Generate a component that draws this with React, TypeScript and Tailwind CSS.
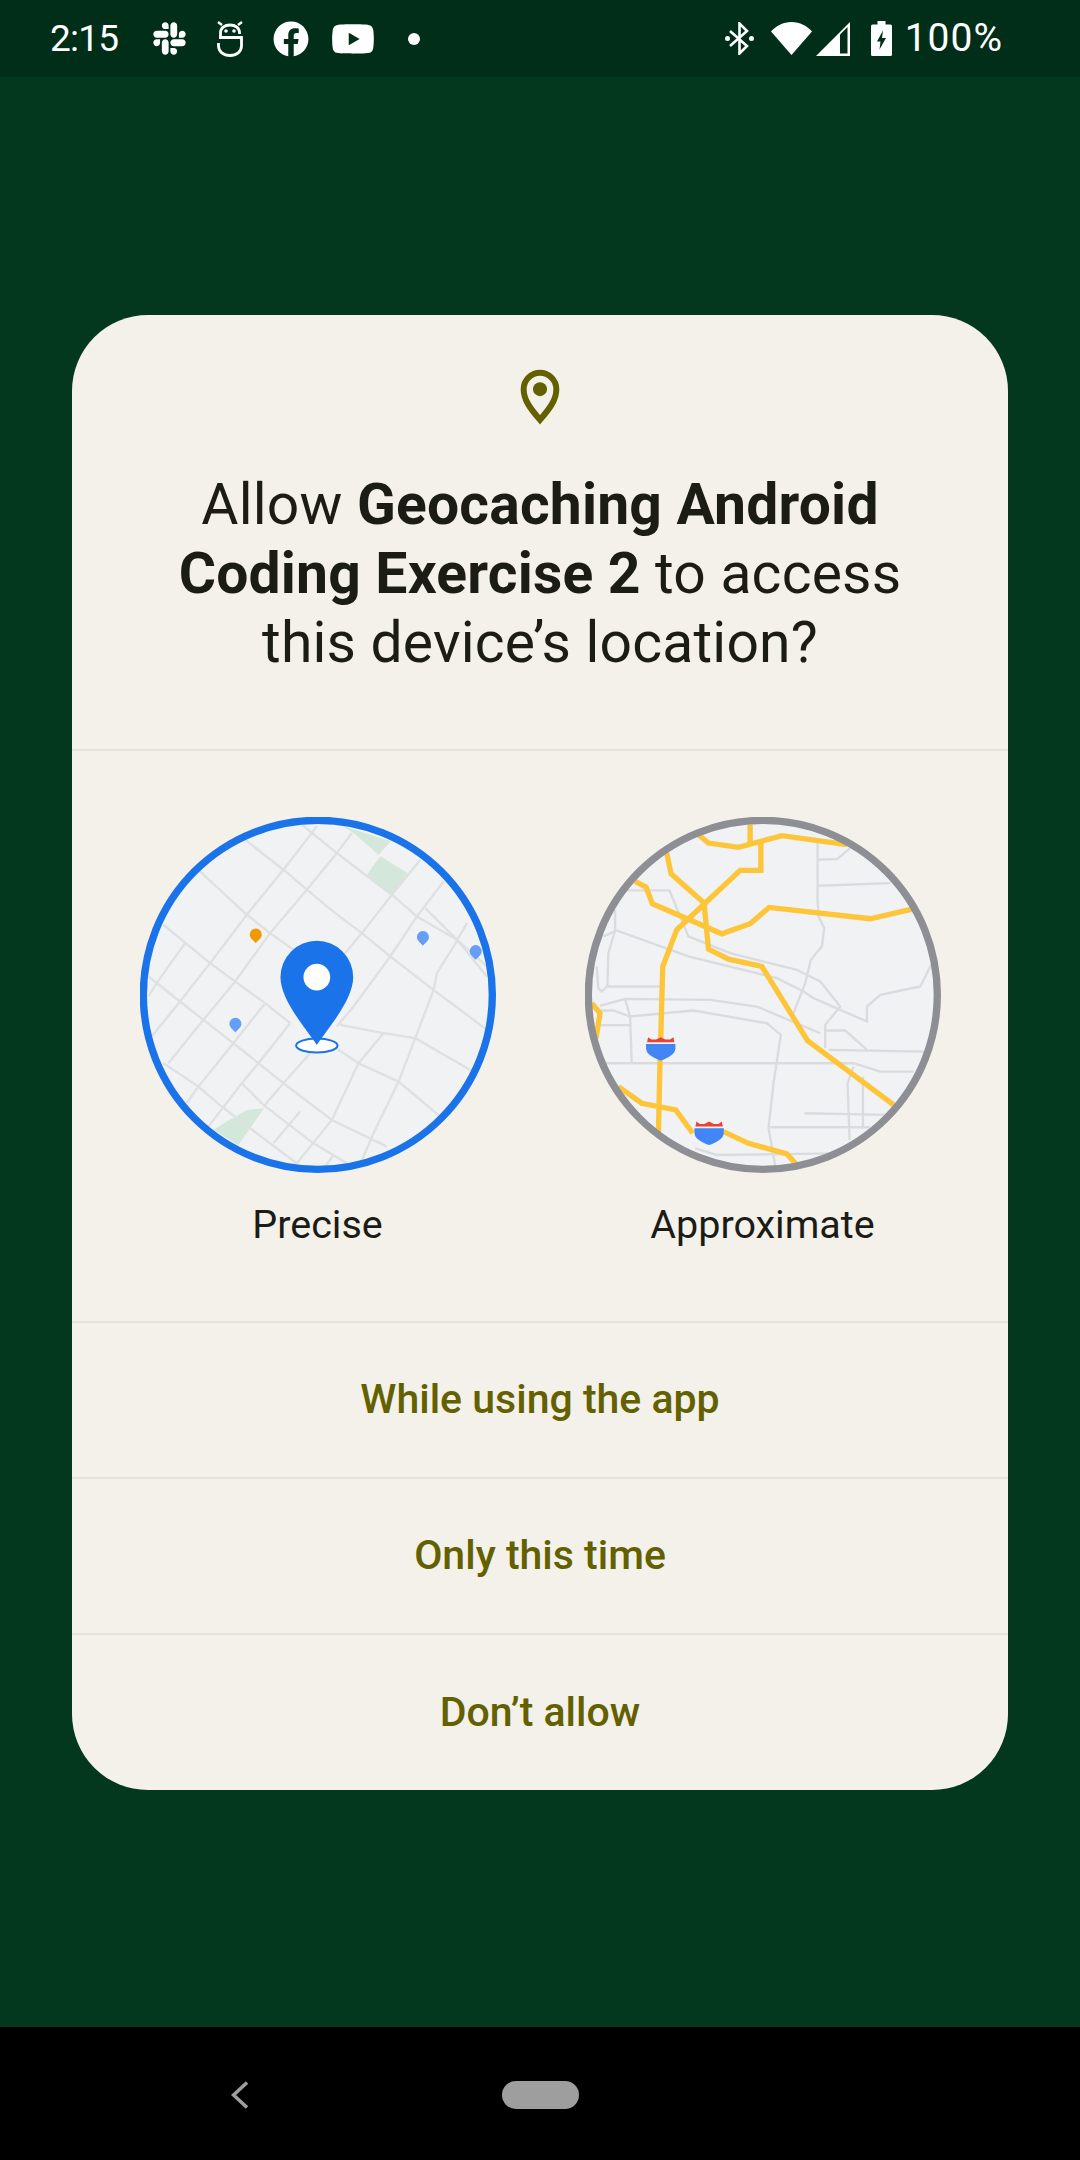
import { FaFacebook, FaSlack, FaYoutube } from "react-icons/fa";

const FONT = "font-['Roboto','Liberation_Sans',sans-serif]";

// map coordinates below are traced from a 1200 unit crop of each circle
const preciseRoads = [
  "M375 120L490 210L560 270L645 340L725 400L810 470L940 570L1100 690",
  "M545 75L650 160L735 225L815 285L890 350L1010 420L1100 530",
  "M240 215L380 345L450 400L590 500",
  "M130 375L270 490L345 545L435 610L510 670",
  "M85 530L180 605L250 660L340 730L415 790L490 850L635 960L800 1040",
  "M130 790L235 860L305 920L390 985L530 1090",
  "M695 100L650 160L560 270L450 400L345 545L250 660L145 790",
  "M590 80L490 210L380 345L270 490L180 605L95 710",
  "M195 430L110 550L85 590",
  "M900 180L815 285L725 400L650 490",
  "M970 245L890 350L810 470L700 620L650 680",
  "M435 610L340 730L235 860L200 910",
  "M510 670L415 790L365 850L265 980",
  "M570 760L490 850L430 920",
  "M1040 370L1000 440L950 520L940 570L885 715L835 845L760 1000L725 1080",
  "M660 675L790 700L885 715L1050 810",
  "M790 700L715 790L635 960L530 1090",
  "M640 740L715 790L835 845L960 950",
  "M915 325L1010 420L1100 500",
  "M540 935L460 1030",
  "M640 1065L615 1100",
  "M365 850L430 915L580 1030L680 1090",
];

const approxRoads = [
  "M742 130L742 300L745 350L762 385L755 440L722 480L705 550L670 640",
  "M745 180L800 178L840 145",
  "M745 258L960 250",
  "M100 410L140 392L355 470L620 535L700 575L730 595L890 665L890 620L930 585L1050 560L1085 490",
  "M135 330L135 392L115 460L112 560L270 560",
  "M170 272L298 272L355 410L480 460L680 510L750 545L810 620L765 675L765 745",
  "M80 500L85 565L95 575L110 560",
  "M90 618L165 597L420 600L560 620L750 700",
  "M90 632L130 632L180 650L370 632L590 670L632 705L610 850L595 985L615 1095",
  "M165 597L180 650L185 790",
  "M85 676L180 676",
  "M105 790L850 790L930 815L1030 815",
  "M765 692L825 692L890 750",
  "M775 750L1060 755",
  "M850 800L832 850L838 1020",
  "M878 830L878 980",
  "M703 940L950 945",
  "M600 982L900 982",
  "M375 1045L440 1065L800 1060",
];

const approxHighways = [
  "M385 105L415 130L505 143L635 108L830 135",
  "M540 75L540 130",
  "M572 130L572 212L510 212L400 315L320 390L278 500L272 715",
  "M290 160L303 222L402 310L415 448L475 478L575 500L712 722L970 915",
  "M195 245L228 262L247 312L455 402L540 372L597 323L900 357L1025 328",
  "M65 610L90 640L78 715",
  "M270 780L265 1000",
  "M145 860L215 910L317 930L368 1000",
  "M460 995L535 1030L650 1062L680 1095",
];

function Drop({ x, y, color }: { x: number; y: number; color: string }) {
  return <path d={`M${x} ${y + 23}C${x - 8} ${y + 14} ${x - 18} ${y + 8} ${x - 18} ${y - 3}a18 18 0 0 1 36 0C${x + 18} ${y + 8} ${x + 8} ${y + 14} ${x} ${y + 23}z`} fill={color} />;
}

function PreciseMap() {
  return (
    <svg viewBox="60 52 1067 1067" className="w-[356px] h-[356px] block">
      <defs>
        <clipPath id="preciseClip">
          <circle cx="593" cy="585" r="525" />
        </clipPath>
      </defs>
      <g clipPath="url(#preciseClip)">
        <rect x="0" y="0" width="1200" height="1200" fill="#f0f2f4" />
        <path d="M670 80L812 125L775 165L700 100zM780 170L862 220L815 285L740 225z" fill="#d3e8da" />
        <path d="M280 990L320 965L380 930L432 925L355 1035z" fill="#d3e8da" />
        {preciseRoads.map((d, i) => (
          <path key={i} d={d} fill="none" stroke="#dee0e2" strokeWidth="7" />
        ))}
      </g>
      <Drop x={407} y={407} color="#f29900" />
      <Drop x={908} y={415} color="#669df6" />
      <Drop x={1066} y={457} color="#669df6" />
      <Drop x={346} y={675} color="#669df6" />
      <ellipse cx="590" cy="737" rx="62" ry="21" fill="#fff" stroke="#1a73e8" strokeWidth="6" />
      <path d="M590 735C560 690 481 600 481 532a109 109 0 0 1 218 0C699 600 620 690 590 735z" fill="#1a73e8" />
      <circle cx="590" cy="532" r="40" fill="#fff" />
      <circle cx="593" cy="585" r="523" fill="none" stroke="#1a73e8" strokeWidth="22" />
    </svg>
  );
}

function Shield({ x, y }: { x: number; y: number }) {
  return (
    <g>
      <path d={`M${x - 41} ${y - 18}L${x - 38} ${y - 33}L${x - 28} ${y - 26}L${x - 14} ${y - 26}L${x} ${y - 33}L${x + 14} ${y - 26}L${x + 28} ${y - 26}L${x + 38} ${y - 33}L${x + 41} ${y - 18}z`} fill="#ea4335" />
      <path d={`M${x - 44} ${y - 13}H${x + 44}V${y}C${x + 44} ${y + 18} ${x + 20} ${y + 30} ${x} ${y + 37}C${x - 20} ${y + 30} ${x - 44} ${y + 18} ${x - 44} ${y}z`} fill="#4285f4" />
    </g>
  );
}

function ApproxMap() {
  return (
    <svg viewBox="45 52 1067 1067" className="w-[356px] h-[356px] block">
      <defs>
        <clipPath id="approxClip">
          <circle cx="578" cy="585" r="525" />
        </clipPath>
      </defs>
      <g clipPath="url(#approxClip)">
        <rect x="0" y="0" width="1200" height="1200" fill="#f0f2f4" />
        {approxRoads.map((d, i) => (
          <path key={i} d={d} fill="none" stroke="#dadbde" strokeWidth="7" />
        ))}
        {approxHighways.map((d, i) => (
          <path key={i} d={d} fill="none" stroke="#fdc53a" strokeWidth="16" />
        ))}
        <Shield x={272} y={745} />
        <Shield x={417} y={998} />
      </g>
      <circle cx="578" cy="585" r="523" fill="none" stroke="#8e8f94" strokeWidth="22" />
    </svg>
  );
}

function RobotIcon() {
  return (
    <svg viewBox="0 0 26 36" className="w-[26px] h-[36px]" fill="none" stroke="#fff" strokeWidth="2.8">
      <path d="M3.500 16V11.500C3.500 7 7.500 4 13 4S22.500 7 22.500 11.500V13" />
      <path d="M2 16.500H24.500V25C24.500 30.500 19.500 34.500 13 34.500S1.500 30.500 1.500 25V22" />
      <path d="M1 1L5 4M25 1L21 4" strokeWidth="2.400" />
      <circle cx="9" cy="10" r="1.800" fill="#fff" stroke="none" />
      <circle cx="17" cy="10" r="1.800" fill="#fff" stroke="none" />
    </svg>
  );
}

function StatusBar() {
  return (
    <div className={`h-[77px] bg-[#002e18] text-white flex items-center justify-between pl-[50px] pr-[77px] ${FONT}`}>
      <div className="flex items-center">
        <span className="text-[37px] w-[101px] tracking-[-0.8px]">2:15</span>
        <FaSlack className="w-[37px] h-[37px]" />
        <div className="ml-[29px]">
          <RobotIcon />
        </div>
        <FaFacebook className="w-[36px] h-[36px] ml-[30px]" />
        <FaYoutube className="w-[44px] h-[44px] ml-[22px]" />
        <span className="w-[12px] h-[12px] rounded-full bg-white ml-[33px]" />
      </div>
      <div className="flex items-center">
        <svg viewBox="0 0 29 33" className="w-[29px] h-[33px]" fill="none" stroke="#fff" strokeWidth="2.6">
          <path d="M5 9L22 24L14.500 31.500V1.500L22 9L5 24" />
          <circle cx="2.500" cy="16.500" r="2.500" fill="#fff" stroke="none" />
          <circle cx="26.500" cy="16.500" r="2.500" fill="#fff" stroke="none" />
        </svg>
        <svg viewBox="0 0 41 33" className="w-[41px] h-[33px] ml-[17px]">
          <path d="M20.500 33L0 9.500C5 4 12 0 20.500 0S36 4 41 9.500z" fill="#fff" />
        </svg>
        <svg viewBox="0 0 34 34" className="w-[34px] h-[34px] ml-[4px]">
          <path d="M0 34L34 0V34z" fill="#fff" />
          <path d="M24 12.500V31.500H31.500V5z" fill="#002e18" />
        </svg>
        <svg viewBox="0 0 21 35" className="w-[21px] h-[35px] ml-[21px]">
          <path d="M1.500 3.500H6.500V0H14.500V3.500H19.500Q21 3.500 21 5V33.500Q21 35 19.500 35H1.500Q0 35 0 33.500V5Q0 3.500 1.500 3.500z" fill="#fff" />
          <path d="M12 9.500L6 20.500H9.500L8.500 28.500L15 17H11z" fill="#002e18" />
        </svg>
        <span className="text-[39px] ml-[13px] leading-none tracking-[1px]">100%</span>
      </div>
    </div>
  );
}

export default function App() {
  const actions = ["While using the app", "Only this time", "Don’t allow"];

  return (
    <div className={`w-[1080px] h-[2160px] flex flex-col bg-[#03381f] ${FONT}`}>
      <StatusBar />

      <div className="flex-1 flex items-center justify-center">
        <div className="w-[936px] h-[1475px] rounded-[76px] bg-[#f4f1ea] flex flex-col overflow-hidden">
          <div className="h-[436px] border-b-2 border-[#e4e2dc] flex flex-col items-center pt-[54px] shrink-0">
            <svg viewBox="120 88 120 170" className="w-[40px] h-[57px]">
              <path d="M180 240C150 205 131 180 131 148a49 49 0 0 1 98 0C229 180 210 205 180 240z" fill="none" stroke="#636000" strokeWidth="18" />
              <circle cx="180" cy="148" r="21" fill="#636000" />
            </svg>
            <h1 className="mt-[44px] text-[57px] leading-[69px] tracking-[0.2px] text-center text-[#1c1c16] font-normal whitespace-nowrap">
              Allow <span className="font-bold">Geocaching Android</span>
              <br />
              <span className="font-bold">Coding Exercise 2</span> to access
              <br />
              this device’s location?
            </h1>
          </div>

          <div className="h-[572px] border-b-2 border-[#e4e2dc] flex justify-center gap-[89px] pt-[66px] shrink-0">
            <div className="flex flex-col items-center">
              <PreciseMap />
              <span className="mt-[30px] text-[39.500px] leading-[44px] text-[#1c1c16]">Precise</span>
            </div>
            <div className="flex flex-col items-center">
              <ApproxMap />
              <span className="mt-[30px] text-[39.500px] leading-[44px] text-[#1c1c16]">Approximate</span>
            </div>
          </div>

          {actions.map((label, i) => (
            <div
              key={label}
              className={`flex-1 flex items-center justify-center text-[41px] font-medium text-[#636000] ${i < 2 ? "border-b-2 border-[#e4e2dc]" : ""}`}
            >
              {label}
            </div>
          ))}
        </div>
      </div>

      <div className="h-[133px] bg-black flex items-center pl-[231px] pt-[2px]">
        <svg viewBox="0 0 17 28" className="w-[17px] h-[28px]" fill="none" stroke="#9e9e9e" strokeWidth="3.500">
          <path d="M16 1.500L2.500 14L16 26.500" />
        </svg>
        <div className="ml-[254px] w-[77px] h-[28px] rounded-full bg-[#9e9e9e]" />
      </div>
    </div>
  );
}
